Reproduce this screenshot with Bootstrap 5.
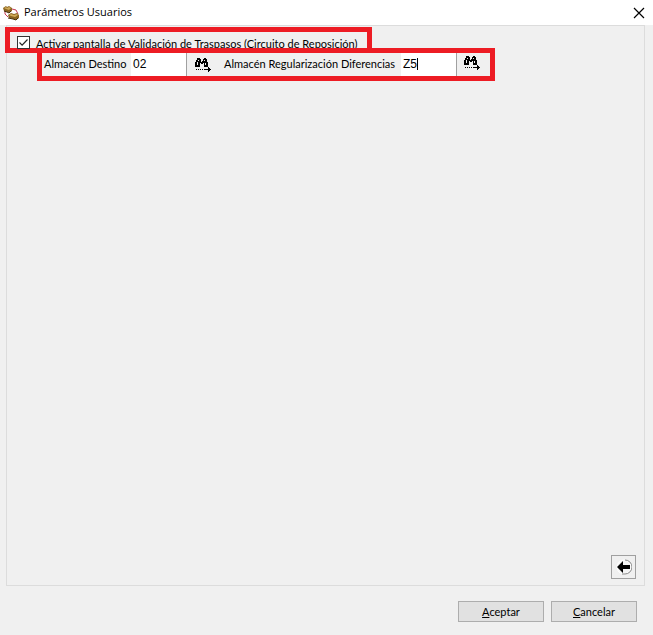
<!DOCTYPE html>
<html lang="es">
<head>
<meta charset="utf-8">
<meta name="viewport" content="width=device-width, initial-scale=1">
<title>Parámetros Usuarios</title>
<link href="https://cdn.jsdelivr.net/npm/bootstrap@5.3.0/dist/css/bootstrap.min.css" rel="stylesheet">
<style>
  body { background: #f0f0f0; color: #000; font: 11px/16px Lato, "Liberation Sans", sans-serif; }
  svg { display: block; }
  .titlebar { height: 25px; background: #fff; padding: 0 8px 0 3px; gap: 5px; }
  .titlebar h1 { font: 11px/16px "Open Sans", "Noto Sans", sans-serif; padding-bottom: 2px; }
  .panel { margin: 0 8px 0 6px; border: 1px solid #dcdcdc; }
  .marked { border: 5px solid #ed1c24; }
  .option { width: 367px; height: 26px; margin: 1px 0 0 -2px; padding: 4px 0 0 7px; gap: 6px; }
  .option label { line-height: 16px; }
  .tick { appearance: none; width: 13px; height: 13px; margin: 0; border: 1px solid #333; background: #fff; }
  .tick:checked { background: #fff url("data:image/svg+xml,%3Csvg xmlns='http://www.w3.org/2000/svg' viewBox='0 0 11 11'%3E%3Cpath d='M1.5 5.5l2.6 2.6 5.4-5.6' fill='none' stroke='%23222' stroke-width='1.2'/%3E%3C/svg%3E") center/11px no-repeat; }
  .stores { width: 458px; height: 33px; margin: -5px 0 0 30px; background: #f0f0f0; }
  .stores label { padding: 0 4px 2px 2px; white-space: nowrap; }
  .first-label { width: 89px; }
  .second-label { width: 179px; }
  .code-field { width: 56px; }
  .code { width: 100%; height: 100%; padding: 0 2px 2px; border: 0; border-right: 1px solid #a0a0a0; border-radius: 0; background: #fff; color: #000; outline: 0; font: 12px/16px "Liberation Sans", Arial, sans-serif; }
  .cursor-bar { left: 16px; top: 5px; width: 1px; height: 12px; background: #000; }
  .find { width: 34px; padding: 0 0 0 8px; border: 0; background: none; }
  .find-first { width: 35px; }
  .find-raised { padding: 0 0 4px 7px; }
  .back { width: 25px; height: 24px; margin: 0 8px 6px 0; padding: 0; border: 1px solid #a0a0a0; background: #f0f0f0; }
  .actions { height: 49px; padding: 2px 16px 0 0; gap: 7px; }
  .action { width: 86px; height: 21px; padding: 0; border: 1px solid #adadad; background: #e1e1e1; color: #000; }
</style>
<script defer src="https://cdn.jsdelivr.net/npm/bootstrap@5.3.0/dist/js/bootstrap.bundle.min.js"></script>
</head>
<body>
<svg class="d-none" aria-hidden="true">
  <symbol id="binoculars" viewBox="0 0 16 15">
    <path d="M2 1h3v1h1v2h2V2h1V1h2v1h1v3h1v5H9V6H8v1H6V6H5v4H0V5h1V3h1z" fill="#000"/>
    <path d="M3 3h1v1H3zM2 5h1v3H2zM9 3h1v1H9zM10 6h1v2h-1zM6 4h1v1H6z" fill="#f0f0f0"/>
    <path d="M1 12h1v1H1zM3 12h1v1H3zM5 12h1v1H5zM7 12h1v1H7zM9 12h4v-2h1v1h1v1h1v1h-1v1h-1v1h-1v-2H9z" fill="#000"/>
  </symbol>
</svg>
<div class="d-flex flex-column min-vh-100">
  <header class="titlebar d-flex align-items-center">
    <svg width="16" height="16" viewBox="0 0 16 16" aria-hidden="true">
      <path d="M2 6v3l3 3M9 4l4 1 2 4" fill="none" stroke="#c23b55"/>
      <path d="M0 3l3-2 1 1 2-1 3 2v3L6 8 4 7 1 6z" fill="#8a6420"/>
      <path d="M1 3l2-1 1 1 2-1 2 1-2 2-3-1z" fill="#d0aa58"/>
      <path d="M5 10l3-2 3 1 3-1 2 2v3l-3 2-3-1-4-1z" fill="#8a6420"/>
      <path d="M6 10l2-1 3 1 3-1 1 1-3 2-4-1z" fill="#d0aa58"/>
      <path d="M1 6l3 1 2 1 2-2M5 13l5 1 3 1 2-2" fill="none" stroke="#44300e"/>
    </svg>
    <h1 class="m-0 flex-grow-1">Parámetros Usuarios</h1>
    <button class="border-0 bg-transparent p-0" type="button" aria-label="Cerrar">
      <svg width="12" height="12" viewBox="0 0 12 12"><path d="M1 1l10 10M11 1L1 11" stroke="#000" stroke-width="1.2"/></svg>
    </button>
  </header>
  <main class="panel flex-grow-1 d-flex flex-column">
    <div class="option marked d-flex align-items-start">
      <input class="tick flex-shrink-0" type="checkbox" id="validation" checked>
      <label class="text-nowrap" for="validation">Activar pantalla de Validación de Traspasos (Circuito de Reposición)</label>
    </div>
    <div class="stores marked d-flex align-items-stretch position-relative">
      <label class="first-label flex-shrink-0 align-self-center" for="target">Almacén Destino</label>
      <div class="code-field flex-shrink-0"><input class="code" type="text" id="target" value="02"></div>
      <button class="find find-first flex-shrink-0" type="button" aria-label="Buscar almacén destino"><svg width="16" height="15"><use href="#binoculars"/></svg></button>
      <label class="second-label flex-shrink-0 align-self-center" for="adjust">Almacén Regularización Diferencias</label>
      <div class="code-field flex-shrink-0 position-relative"><input class="code" type="text" id="adjust" value="Z5"><span class="cursor-bar position-absolute"></span></div>
      <button class="find find-raised" type="button" aria-label="Buscar almacén regularización"><svg width="16" height="15"><use href="#binoculars"/></svg></button>
    </div>
    <button class="back mt-auto align-self-end d-flex align-items-center justify-content-center" type="button" aria-label="Volver">
      <svg width="16" height="16" viewBox="0 0 16 16">
        <circle cx="8" cy="8" r="7" fill="#f4f4f4" stroke="#fff"/>
        <path d="M9 1a7 7 0 0 1 0 14H6" fill="none" stroke="#888"/>
        <path d="M1 8l6-6v4h7v4H7v4z" fill="#000"/>
      </svg>
    </button>
  </main>
  <footer class="actions d-flex align-items-center justify-content-end">
    <button class="action" type="button"><u>A</u>ceptar</button>
    <button class="action" type="button"><u>C</u>ancelar</button>
  </footer>
</div>
</body>
</html>
